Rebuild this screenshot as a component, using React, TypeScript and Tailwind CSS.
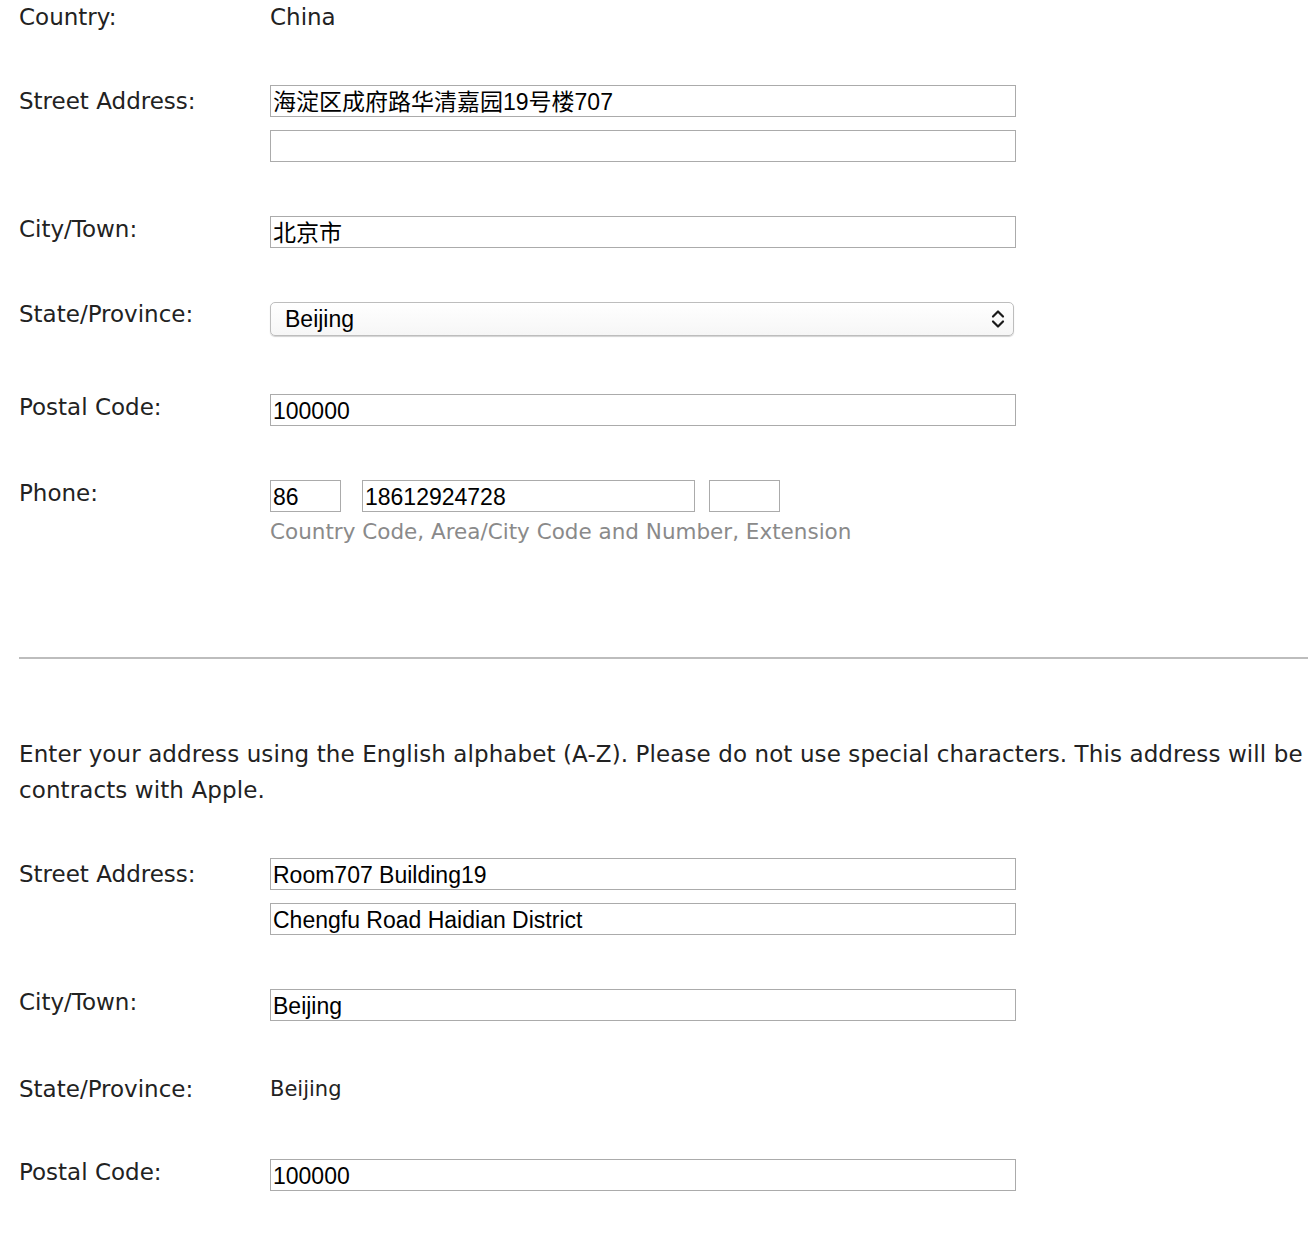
import React from "react";

const labelFont = "font-['DejaVu_Sans',sans-serif]";
const inputFont = "font-['Liberation_Sans','Noto_Sans_CJK_SC',sans-serif]";

const Field = ({ value = "", className = "w-[746px]" }: { value?: string; className?: string }) => (
  <input
    readOnly
    value={value}
    className={`${className} h-[32px] border border-[#ababab] bg-white pl-[2px] pt-[2px] text-[23px] leading-normal text-black outline-none ${inputFont}`}
  />
);

const Row = ({ label, className = "", labelClass = "", children }: { label: string; className?: string; labelClass?: string; children: React.ReactNode }) => (
  <div className={`flex ${className}`}>
    <div className={`w-[251px] shrink-0 text-[23px] leading-[27px] text-[#222] ${labelClass}`}>{label}</div>
    <div className="flex flex-col">{children}</div>
  </div>
);

const Chevrons = () => (
  <svg width="16" height="22" viewBox="0 0 16 22" fill="none" stroke="#1a1a1a" strokeWidth="2.2" strokeLinecap="round" strokeLinejoin="round">
    <path d="M3 8.5 L8 3.5 L13 8.5" />
    <path d="M3 13.5 L8 18.5 L13 13.5" />
  </svg>
);

export default function App() {
  return (
    <div className={`w-[1308px] h-[1252px] overflow-hidden bg-white pl-[19px] ${labelFont}`}>
      {/* ── Native address ── */}
      <Row label="Country:" className="pt-[4px]">
        <span className="text-[23px] leading-[27px] text-[#222]">China</span>
      </Row>

      <Row label="Street Address:" className="mt-[54px]" labelClass="pt-[3px]">
        <Field value="海淀区成府路华清嘉园19号楼707" />
        <Field className="mt-[13px] w-[746px]" />
      </Row>

      <Row label="City/Town:" className="mt-[54px]">
        <Field value="北京市" />
      </Row>

      <Row label="State/Province:" className="mt-[54px]" labelClass="-mt-[1px]">
        <div className="flex h-[34px] w-[744px] items-center justify-between rounded-[5px] border border-[#bdbdbd] bg-gradient-to-b from-white to-[#f6f6f6] pl-[14px] pr-[7px] shadow-[0_1px_1px_rgba(0,0,0,0.18)]">
          <span className={`text-[23px] leading-normal text-black ${inputFont}`}>Beijing</span>
          <Chevrons />
        </div>
      </Row>

      <Row label="Postal Code:" className="mt-[58px]">
        <Field value="100000" />
      </Row>

      <Row label="Phone:" className="mt-[54px]">
        <div className="flex gap-[21px]">
          <Field value="86" className="w-[71px]" />
          <Field value="18612924728" className="w-[333px]" />
          <Field className="-ml-[7px] w-[71px]" />
        </div>
        <span className="mt-[7px] text-[21.5px] leading-[25px] text-[#8a8a8a]">Country Code, Area/City Code and Number, Extension</span>
      </Row>

      <hr className="mt-[113px] border-0 border-t-2 border-[#bdbdbd]" />

      {/* ── Latin address ── */}
      <div className="mt-[77px] text-[23px] leading-[36px] tracking-[0.1px] text-[#222]">
        <p className="whitespace-nowrap">
          Enter your address using the English alphabet (A-Z). Please do not use special characters. This address will be
        </p>
        <p>contracts with Apple.</p>
      </div>

      <Row label="Street Address:" className="mt-[50px]" labelClass="pt-[3px]">
        <Field value="Room707 Building19" />
        <Field value="Chengfu Road Haidian District" className="mt-[13px] w-[746px]" />
      </Row>

      <Row label="City/Town:" className="mt-[54px]">
        <Field value="Beijing" />
      </Row>

      <Row label="State/Province:" className="mt-[55px]">
        <span className="text-[21px] leading-[27px] text-[#222]">Beijing</span>
      </Row>

      <Row label="Postal Code:" className="mt-[56px]">
        <Field value="100000" />
      </Row>
    </div>
  );
}
